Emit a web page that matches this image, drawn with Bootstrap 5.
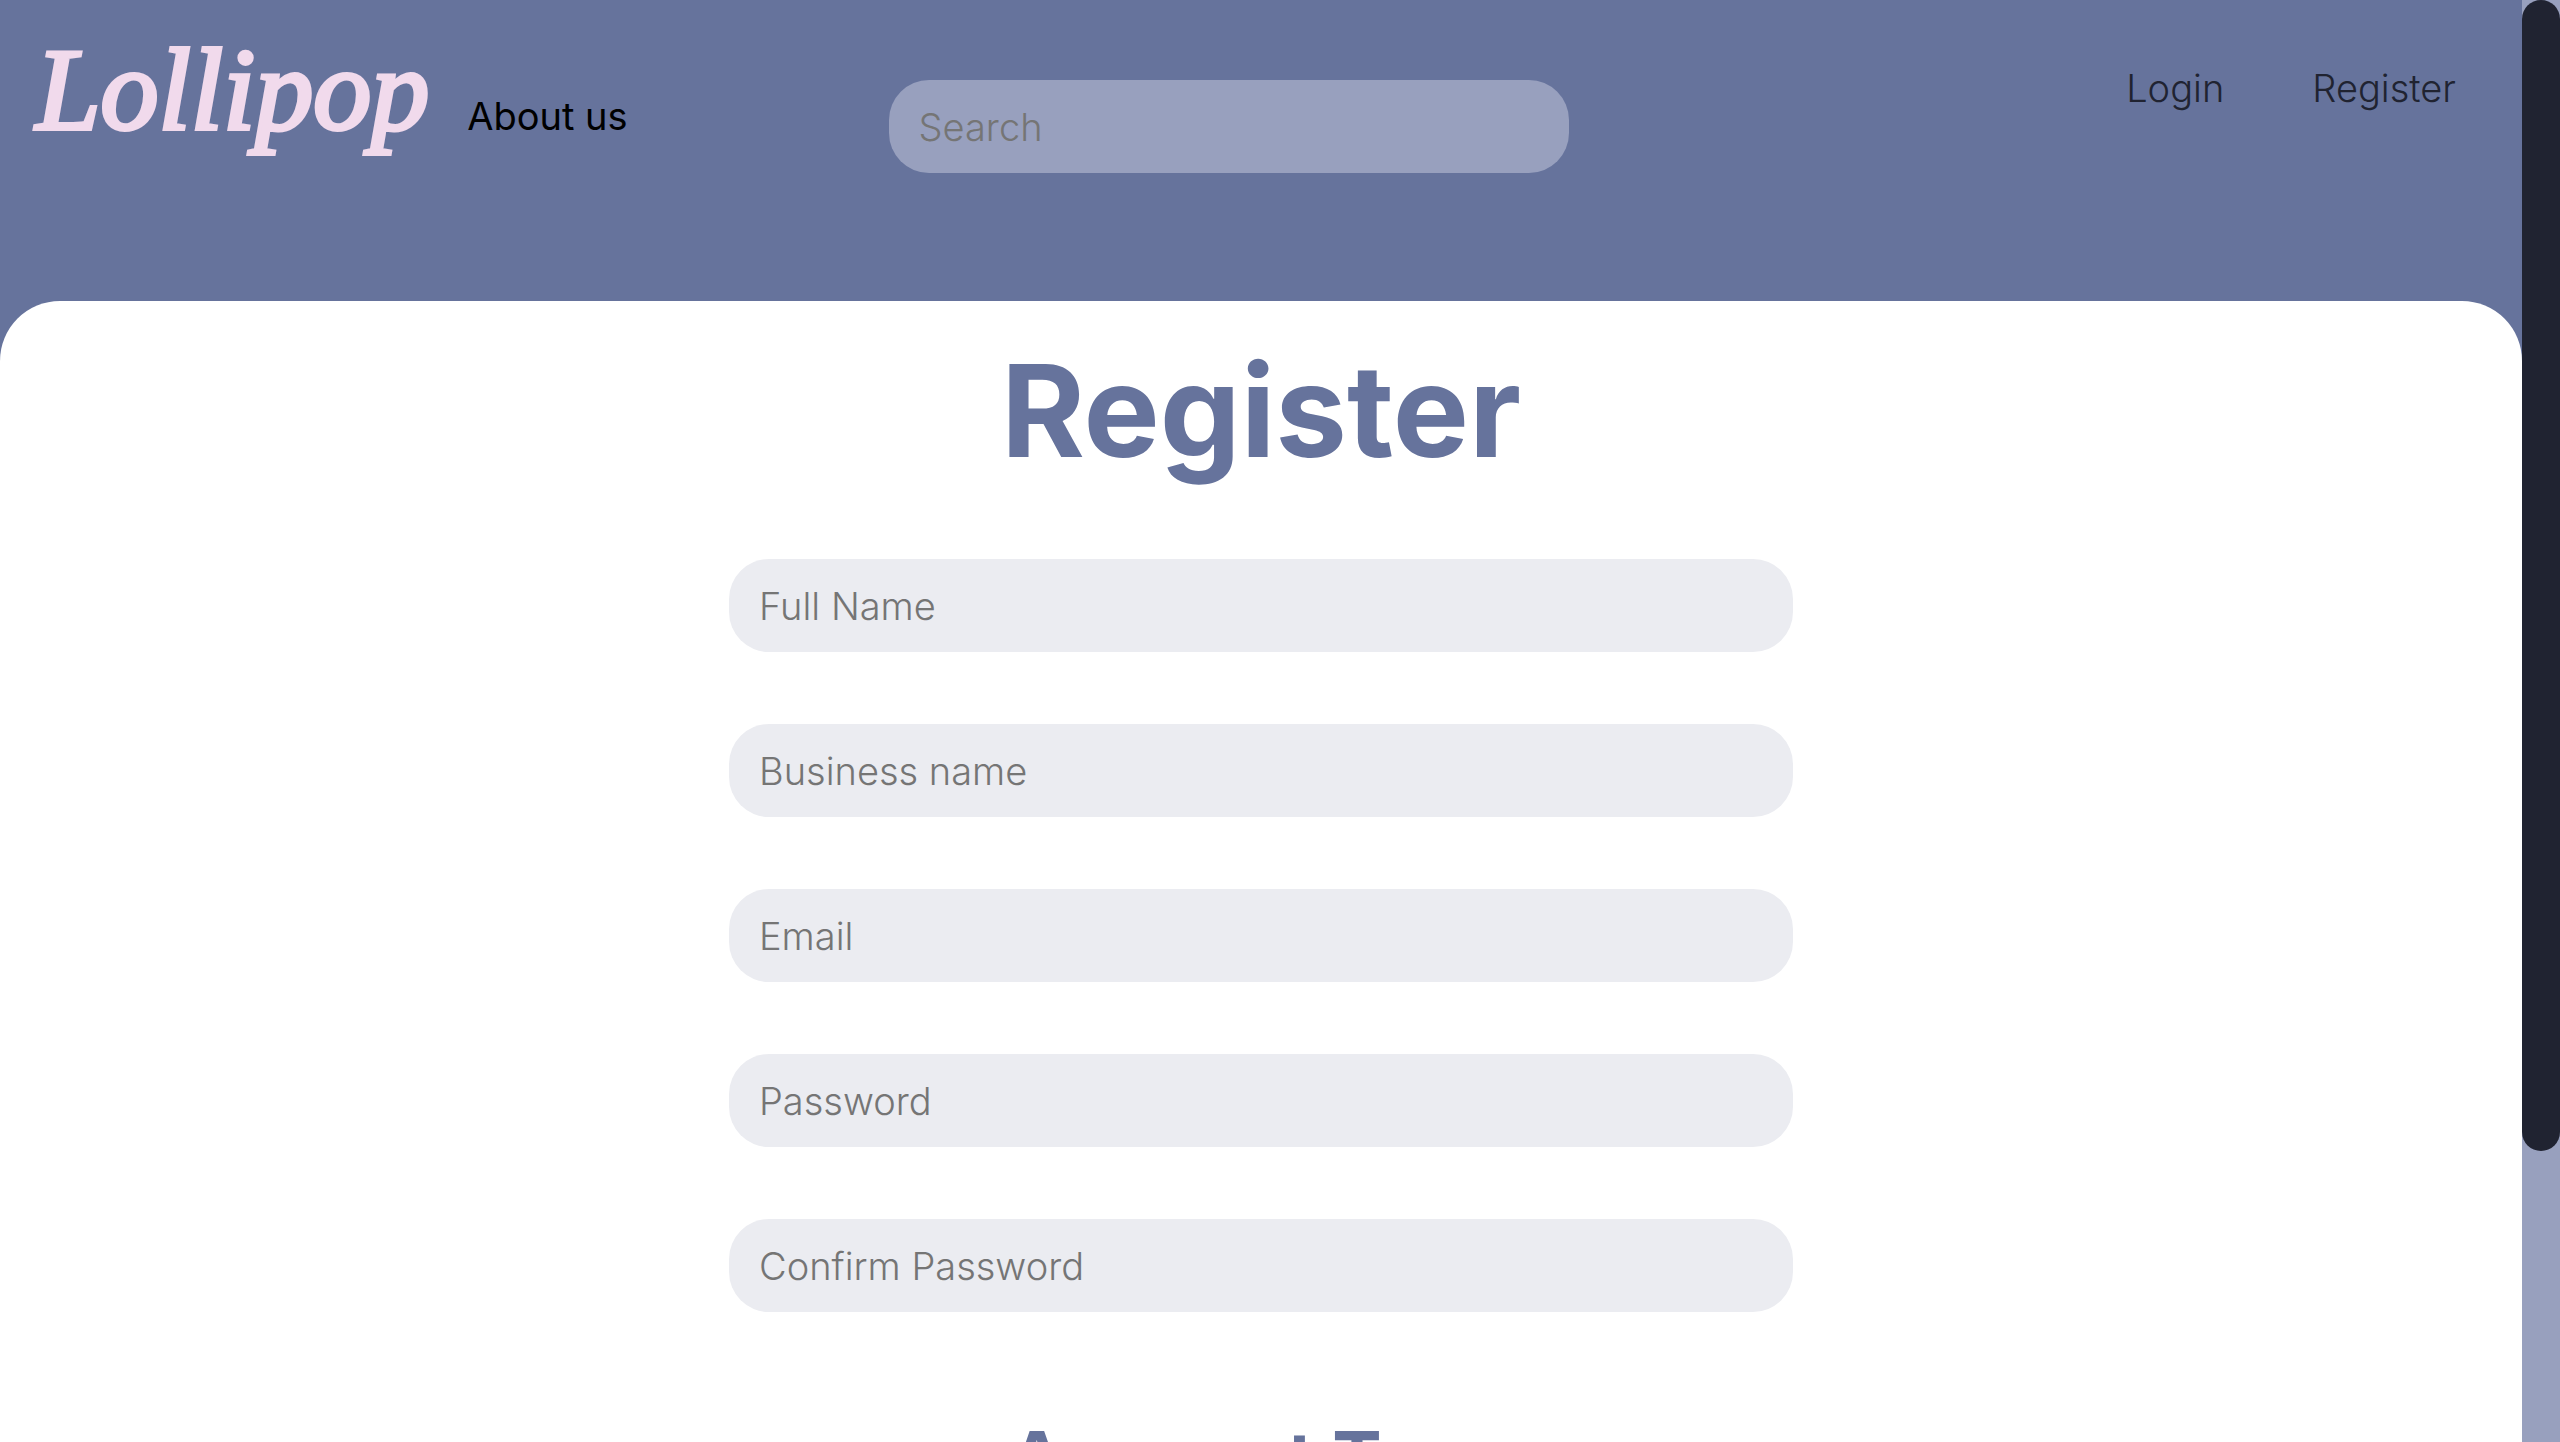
<!DOCTYPE html>
<html lang="en">
<head>
<meta charset="utf-8">
<meta name="viewport" content="width=device-width, initial-scale=1">
<title>Lollipop</title>
<link href="https://cdn.jsdelivr.net/npm/bootstrap@5.3.0/dist/css/bootstrap.min.css" rel="stylesheet">
<style>
  :root { --slate: #66739c; --haze: #98a0be; --ink: #202331; }
  body { font-family: Inter, "Liberation Sans", sans-serif; font-size: 38px; line-height: 48px; background: var(--slate); }
  .site-header { height: 301px; padding: 0 66px 0 36px; }
  .brand { font: italic 400 116px/120px "Liberation Serif", serif; color: #f1daec; -webkit-text-stroke: 4px #f1daec; margin-top: 30px; }
  .nav-about { color: #000; margin: 92px 0 0 38px; }
  .top-search { width: 680px; margin: 80px 0 0 261px; }
  .top-links { gap: 88px; margin-top: 64px; }
  .top-links a { color: var(--ink); font-weight: 300; }
  .pill { height: 93px; padding: 0 30px; border: 0; border-radius: 40px; font-size: 38px; font-weight: 300; background: #ebecf1; }
  .pill:focus { background: #ebecf1; }
  .pill::placeholder { color: #757575; opacity: 1; }
  .top-search .pill { background: var(--haze); }
  .sheet { border-radius: 60px 60px 0 0; padding-top: 30px; }
  .sheet h1, .sheet h2 { color: var(--slate); font-weight: 700; }
  .sheet h1 { font-size: 128px; line-height: 160px; margin-bottom: 68px; }
  .sheet h2 { font-size: 74px; line-height: 92px; margin-top: 28px; }
  .fields { max-width: 1064px; gap: 72px; }
  .scroll-track { width: 38px; background: var(--haze); }
  .scroll-thumb { height: 79.8%; border-radius: 19px; background: var(--ink); }
</style>
</head>
<body>
<div class="d-flex vh-100 overflow-hidden">
  <div class="d-flex flex-column flex-grow-1 overflow-hidden">
    <header class="site-header d-flex align-items-start flex-shrink-0">
      <a class="brand text-decoration-none" href="#">Lollipop</a>
      <a class="nav-about text-decoration-none" href="#">About us</a>
      <form class="top-search" role="search">
        <label class="visually-hidden" for="search">Search</label>
        <input class="form-control pill" id="search" type="search" placeholder="Search">
      </form>
      <nav class="top-links d-flex ms-auto">
        <a class="text-decoration-none" href="#">Login</a>
        <a class="text-decoration-none" href="#">Register</a>
      </nav>
    </header>
    <main class="sheet bg-white flex-grow-1">
      <h1 class="text-center">Register</h1>
      <form class="fields d-flex flex-column mx-auto">
        <div><label class="visually-hidden" for="fullname">Full Name</label><input class="form-control pill" id="fullname" type="text" placeholder="Full Name"></div>
        <div><label class="visually-hidden" for="business">Business name</label><input class="form-control pill" id="business" type="text" placeholder="Business name"></div>
        <div><label class="visually-hidden" for="email">Email</label><input class="form-control pill" id="email" type="email" placeholder="Email"></div>
        <div><label class="visually-hidden" for="password">Password</label><input class="form-control pill" id="password" type="password" placeholder="Password"></div>
        <div><label class="visually-hidden" for="confirm">Confirm Password</label><input class="form-control pill" id="confirm" type="password" placeholder="Confirm Password"></div>
        <h2 class="text-center">Account Type</h2>
      </form>
    </main>
  </div>
  <div class="scroll-track flex-shrink-0" aria-hidden="true"><div class="scroll-thumb"></div></div>
</div>
<script src="https://cdn.jsdelivr.net/npm/bootstrap@5.3.0/dist/js/bootstrap.bundle.min.js"></script>
</body>
</html>
